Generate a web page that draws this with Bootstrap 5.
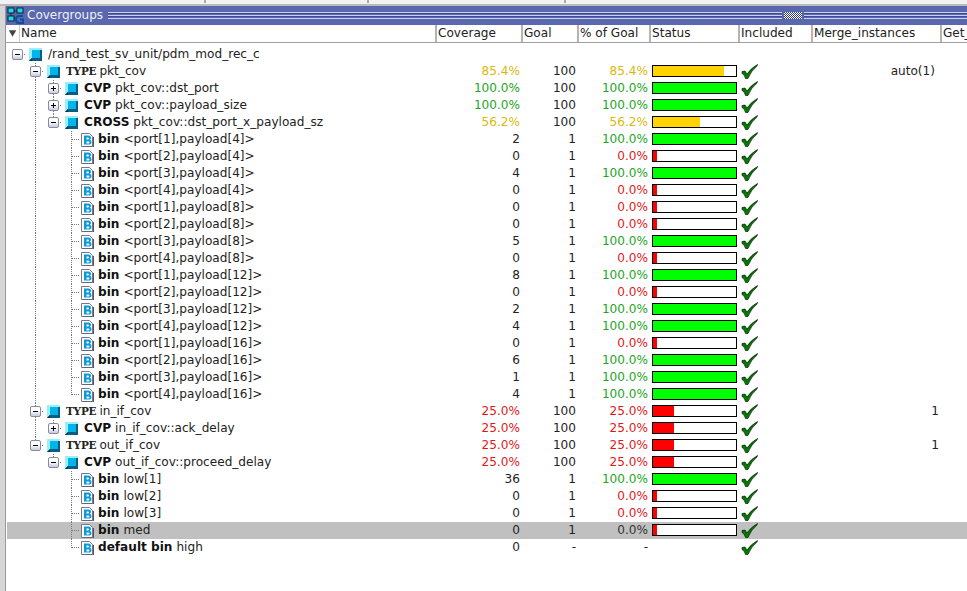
<!DOCTYPE html>
<html lang="en">
<head>
  <meta charset="UTF-8" />
  <title>Covergroups</title>
  <link href="https://cdn.jsdelivr.net/npm/bootstrap@5.3.3/dist/css/bootstrap.min.css" rel="stylesheet"/>
  <style>
    html, body { height: 100%; overflow: hidden; background: #fff; }
    body { font-family: "DejaVu Sans", sans-serif; font-size: 12.1px; line-height: 17px; color: #222; }
    .top-strip { height: 6px; background: #f2f2f2; border-bottom: 2px solid #bbb; }
    .top-tab { height: 3px; border-right: 2px solid #aaa; }
    .tab-a { width: 206px; }
    .tab-b { width: 163px; }
    .tab-c { width: 197px; }
    .left-gutter { width: 6px; background: #d6d6d6; border-right: 1px solid #999; flex: none; }
    .title-bar { height: 19px; background: #5b68ad; color: #eef0fa; font-size: 12px; line-height: 19px; padding-left: 1px; }
    .title-text { margin: 0 5px 0 3px; }
    .grip-line { height: 7px; background: linear-gradient(#c9d0f0 0 1px, #3c4a98 1px 2px, #5b68ad 2px 3px, #c9d0f0 3px 4px, #3c4a98 4px 5px, #5b68ad 5px 6px, #c9d0f0 6px); }
    .grip-right { width: 163px; flex: none; }
    .grip-dots { width: 18px; height: 7px; margin: 0 2px; flex: none; background: repeating-conic-gradient(#fff 0 25%, #2f3c88 0 50%) 0 0 / 2px 2px; }
    .head-row { height: 18px; border-bottom: 1px solid #a0a0a0; color: #222; }
    .head-cell { border-right: 2px solid #b4b4b4; padding-left: 1px; flex: none; line-height: 17px; white-space: nowrap; overflow: hidden; }
    .sort-box { width: 13px; height: 17px; flex: none; margin: 0 1px 0 0; border-right: 1px solid #ccc; }
    .rows-area { padding: 3px 0 0 1px; }
    .data-row { height: 17px; white-space: nowrap; }
    .data-row.is-selected { background: #c0c0c0; }
    .c-name { width: 431px; }
    .c-cov { width: 86px; }
    .c-goal { width: 56px; }
    .c-pct { width: 72px; }
    .c-status { width: 89px; }
    .c-incl { width: 73px; }
    .c-merge { width: 129px; }
    .cell { flex: none; text-align: right; padding-right: 2px; }
    .cell-name { flex: none; width: 429px; padding-left: 1px; text-align: left; }
    .is-ok { color: #22a522; }
    .is-warn { color: #dcb80c; }
    .is-bad { color: #e01818; }
    .is-selected .pct-sel { color: #333; }
    .slot { width: 18px; height: 17px; flex: none; background: var(--lv, none), var(--lh, none); }
    .dots-v { --lv: repeating-linear-gradient(#777 0 1px, transparent 1px 2px) no-repeat 9px 0 / 1px 100%; }
    .dots-top { --lv: repeating-linear-gradient(#777 0 1px, transparent 1px 2px) no-repeat 9px 0 / 1px 9px; }
    .dots-h { --lh: repeating-linear-gradient(90deg, #777 0 1px, transparent 1px 2px) no-repeat 10px 8px / 8px 1px; }
    .tog { width: 11px; height: 11px; margin: 3px 0 0 4px; border: 1px solid #8a8a9c; border-radius: 2px; background: linear-gradient(#fff 40%, #c6cbe2); }
    .tog svg { display: block; }
    .ico-node { margin: 2px 6px 0 3px; flex: none; }
    .ico-bin { margin: 2px 4px 0 1px; flex: none; }
    .kw { font-weight: 700; color: #111; margin-right: 4px; }
    .kw-type { font-family: "DejaVu Serif", serif; font-weight: 700; font-size: 10.5px; letter-spacing: -.2px; color: #222; margin-right: 3px; }
    .bar-box { width: 85px; height: 12px; margin: 2px 0 0 2px; border: 1px solid #000; background: #fff; }
    .bar-fill { height: 100%; }
    .fill-ok { background: #00ff00; }
    .fill-warn { background: #ffd400; }
    .fill-bad { background: #ff0000; }
    .tick { margin: 1px 0 0 2px; display: block; }
  </style>
</head>
<body class="d-flex flex-column">
  <div class="top-strip d-flex">
    <div class="top-tab tab-a"></div><div class="top-tab tab-b"></div><div class="top-tab tab-c"></div>
  </div>
  <div class="d-flex flex-grow-1 overflow-hidden">
    <div class="left-gutter"></div>
    <div class="flex-grow-1 overflow-hidden">
      <div class="title-bar d-flex align-items-center">
        <svg width="17" height="17" viewBox="0 0 17 17" class="flex-shrink-0">
          <path d="M4 5v6h4M5 4h6" stroke="#222" fill="none"/>
          <rect x="1" y="1" width="6" height="5" fill="#19d8e8" stroke="#123"/>
          <rect x="10" y="1" width="6" height="5" fill="#19d8e8" stroke="#123"/>
          <rect x="1" y="9" width="6" height="5" fill="#19d8e8" stroke="#123"/>
          <path d="M16 9h-4q-3 0-3 3.500t3 3.500h4v-3.500h-3" fill="none" stroke="#0c4f9c" stroke-width="2"/>
        </svg>
        <span class="title-text">Covergroups</span>
        <div class="grip-line flex-grow-1"></div>
        <div class="grip-dots"></div>
        <div class="grip-line grip-right"></div>
      </div>
      <div class="head-row d-flex">
        <div class="head-cell c-name d-flex">
          <svg class="sort-box" viewBox="0 0 13 17"><path d="M2 5h8L6 12z" fill="#444"/></svg>Name
        </div>
        <div class="head-cell c-cov">Coverage</div>
        <div class="head-cell c-goal">Goal</div>
        <div class="head-cell c-pct">% of Goal</div>
        <div class="head-cell c-status">Status</div>
        <div class="head-cell c-incl">Included</div>
        <div class="head-cell c-merge">Merge_instances</div>
        <div class="head-cell flex-grow-1 border-0">Get_</div>
      </div>
      <div id="rows" class="rows-area"></div>
    </div>
  </div>

  <script>
    const filas = [
      { d: 0, t: "root", name: "/rand_test_sv_unit/pdm_mod_rec_c", open: true },
      { d: 1, t: "node", kw: "TYPE", name: "pkt_cov", cov: "85.4%", goal: "100", pct: 85.4, merge: "auto(1)", open: true, down: true },
      { d: 2, t: "node", kw: "CVP", name: "pkt_cov::dst_port", cov: "100.0%", goal: "100", pct: 100, open: false, down: true },
      { d: 2, t: "node", kw: "CVP", name: "pkt_cov::payload_size", cov: "100.0%", goal: "100", pct: 100, open: false, down: true },
      { d: 2, t: "node", kw: "CROSS", name: "pkt_cov::dst_port_x_payload_sz", cov: "56.2%", goal: "100", pct: 56.2, open: true }
    ];
    const binsCruz = [["<port[1],payload[4]>",2],["<port[2],payload[4]>",0],["<port[3],payload[4]>",4],["<port[4],payload[4]>",0],
      ["<port[1],payload[8]>",0],["<port[2],payload[8]>",0],["<port[3],payload[8]>",5],["<port[4],payload[8]>",0],
      ["<port[1],payload[12]>",8],["<port[2],payload[12]>",0],["<port[3],payload[12]>",2],["<port[4],payload[12]>",4],
      ["<port[1],payload[16]>",0],["<port[2],payload[16]>",6],["<port[3],payload[16]>",1],["<port[4],payload[16]>",4]];
    binsCruz.forEach((b, i) => filas.push({ d: 3, t: "bin", kw: "bin", name: b[0], cov: String(b[1]), goal: "1", pct: b[1] > 0 ? 100 : 0, last: i === binsCruz.length - 1 }));
    filas.push({ d: 1, t: "node", kw: "TYPE", name: "in_if_cov", cov: "25.0%", goal: "100", pct: 25, merge: "1", open: true, down: true });
    filas.push({ d: 2, t: "node", kw: "CVP", name: "in_if_cov::ack_delay", cov: "25.0%", goal: "100", pct: 25, open: false });
    filas.push({ d: 1, t: "node", kw: "TYPE", name: "out_if_cov", cov: "25.0%", goal: "100", pct: 25, merge: "1", open: true });
    filas.push({ d: 2, t: "node", kw: "CVP", name: "out_if_cov::proceed_delay", cov: "25.0%", goal: "100", pct: 25, open: true });
    filas.push({ d: 3, t: "bin", kw: "bin", name: "low[1]", cov: "36", goal: "1", pct: 100 });
    filas.push({ d: 3, t: "bin", kw: "bin", name: "low[2]", cov: "0", goal: "1", pct: 0 });
    filas.push({ d: 3, t: "bin", kw: "bin", name: "low[3]", cov: "0", goal: "1", pct: 0 });
    filas.push({ d: 3, t: "bin", kw: "bin", name: "med", cov: "0", goal: "1", pct: 0, sel: true });
    filas.push({ d: 3, t: "bin", kw: "default bin", name: "high", cov: "0", goal: "-", pct: null, last: true });

    const icoNode = `<svg class="ico-node" width="13" height="13" viewBox="0 0 13 13"><path d="M0 0h13v13H0z" fill="#0a5d80"/><path d="M0 13V0h13v2H3v8z" fill="#9af0f8"/><path d="M3 2h8v8H3z" fill="#00b4ec"/><path d="M0 13l3-3v3z" fill="#04344a"/></svg>`;
    const icoBin = `<svg class="ico-bin" width="13" height="14" viewBox="0 0 13 14"><path d="M.5.500h8l3 3v10H.5z" fill="#fff" stroke="#77768a"/><path d="M12.500 4v10H2" fill="none" stroke="#55546a"/><path d="M3 2.500h4.500q2.500 0 2.500 2.200 0 1.500-1.200 2.100 1.700.5 1.700 2.400 0 2.300-2.800 2.300H3z" fill="#0a9ad8"/><path d="M5.500 4.500h1.500q1 0 1 1t-1 1H5.500zM5.500 8.500h2q1 0 1 1t-1 1h-2z" fill="#fff"/></svg>`;
    const tick = `<svg class="tick" width="17" height="16" viewBox="0 0 17 16"><path d="M1 7.500L4 7l2 3Q10 4 16.500.500L16 2Q10 7 7 14.500H4.500Q3.500 10.500 1 9.500z" fill="#007a00" stroke="#000" stroke-width=".6"/></svg>`;

    function esc(s) { return s.replace(/</g, "&lt;").replace(/>/g, "&gt;"); }

    const ultimoTipo = filas.findIndex(x => x.name === "out_if_cov");

    // one 18px slot per tree level, the dotted lines are backgrounds of the slots
    function ramas(f) {
      let html = "";
      for (let i = 0; i < f.d; i++) {
        const guia = i === 1 && filas.indexOf(f) < ultimoTipo;
        html += `<span class="slot ${guia ? "dots-v" : ""}"></span>`;
      }
      if (f.t === "bin") {
        return html + `<span class="slot dots-h ${f.last ? "dots-top" : "dots-v"}"></span>`;
      }
      let cls = "slot dots-h";
      if (f.d > 0) cls += f.down ? " dots-v" : " dots-top";
      const simbolo = f.open
        ? `<path d="M2 4.500h5" stroke="#000"/>`
        : `<path d="M2 4.500h5M4.500 2v5" stroke="#000"/>`;
      return html + `<span class="${cls}"><span class="tog d-block"><svg width="9" height="9">${simbolo}</svg></span></span>`;
    }

    const cuerpo = filas.map(f => {
      let color = "", fill = "";
      if (f.pct !== undefined && f.pct !== null) {
        color = f.pct === 100 ? "is-ok" : f.pct > 50 ? "is-warn" : "is-bad";
        fill = f.pct === 100 ? "fill-ok" : f.pct > 50 ? "fill-warn" : "fill-bad";
      }
      const kw = f.kw === "TYPE" ? `<span class="kw-type">TYPE</span>` : f.kw ? `<span class="kw">${f.kw}</span>` : "";
      const ico = f.t === "bin" ? icoBin : icoNode;
      const ancho = f.pct === null || f.pct === undefined ? 0 : Math.max(f.pct, 5);
      const pctTxt = f.pct === null ? "-" : f.pct === undefined ? "" : f.pct.toFixed(1) + "%";
      const covCls = f.t === "bin" ? "" : color;
      const barra = f.pct === null || f.pct === undefined ? "" :
        `<div class="bar-box"><div class="bar-fill ${fill}" style="width:${ancho}%"></div></div>`;
      const check = f.t === "root" ? "" : tick;
      const merge = f.merge === "auto(1)" ? `<span class="me-1">${f.merge}</span>` : (f.merge || "");
      return `<div class="data-row d-flex ${f.sel ? "is-selected" : ""}">
        <div class="cell-name d-flex">${ramas(f)}${ico}<span>${kw}${esc(f.name)}</span></div>
        <div class="cell c-cov ${covCls}">${f.cov || ""}</div>
        <div class="cell c-goal">${f.goal || ""}</div>
        <div class="cell c-pct ${f.sel ? "pct-sel" : color}">${pctTxt}</div>
        <div class="cell c-status text-start">${barra}</div>
        <div class="cell c-incl text-start">${check}</div>
        <div class="cell c-merge">${merge}</div>
      </div>`;
    }).join("");
    document.getElementById("rows").innerHTML = cuerpo;
  </script>
  <script src="https://cdn.jsdelivr.net/npm/bootstrap@5.3.3/dist/js/bootstrap.bundle.min.js"></script>
</body>
</html>
